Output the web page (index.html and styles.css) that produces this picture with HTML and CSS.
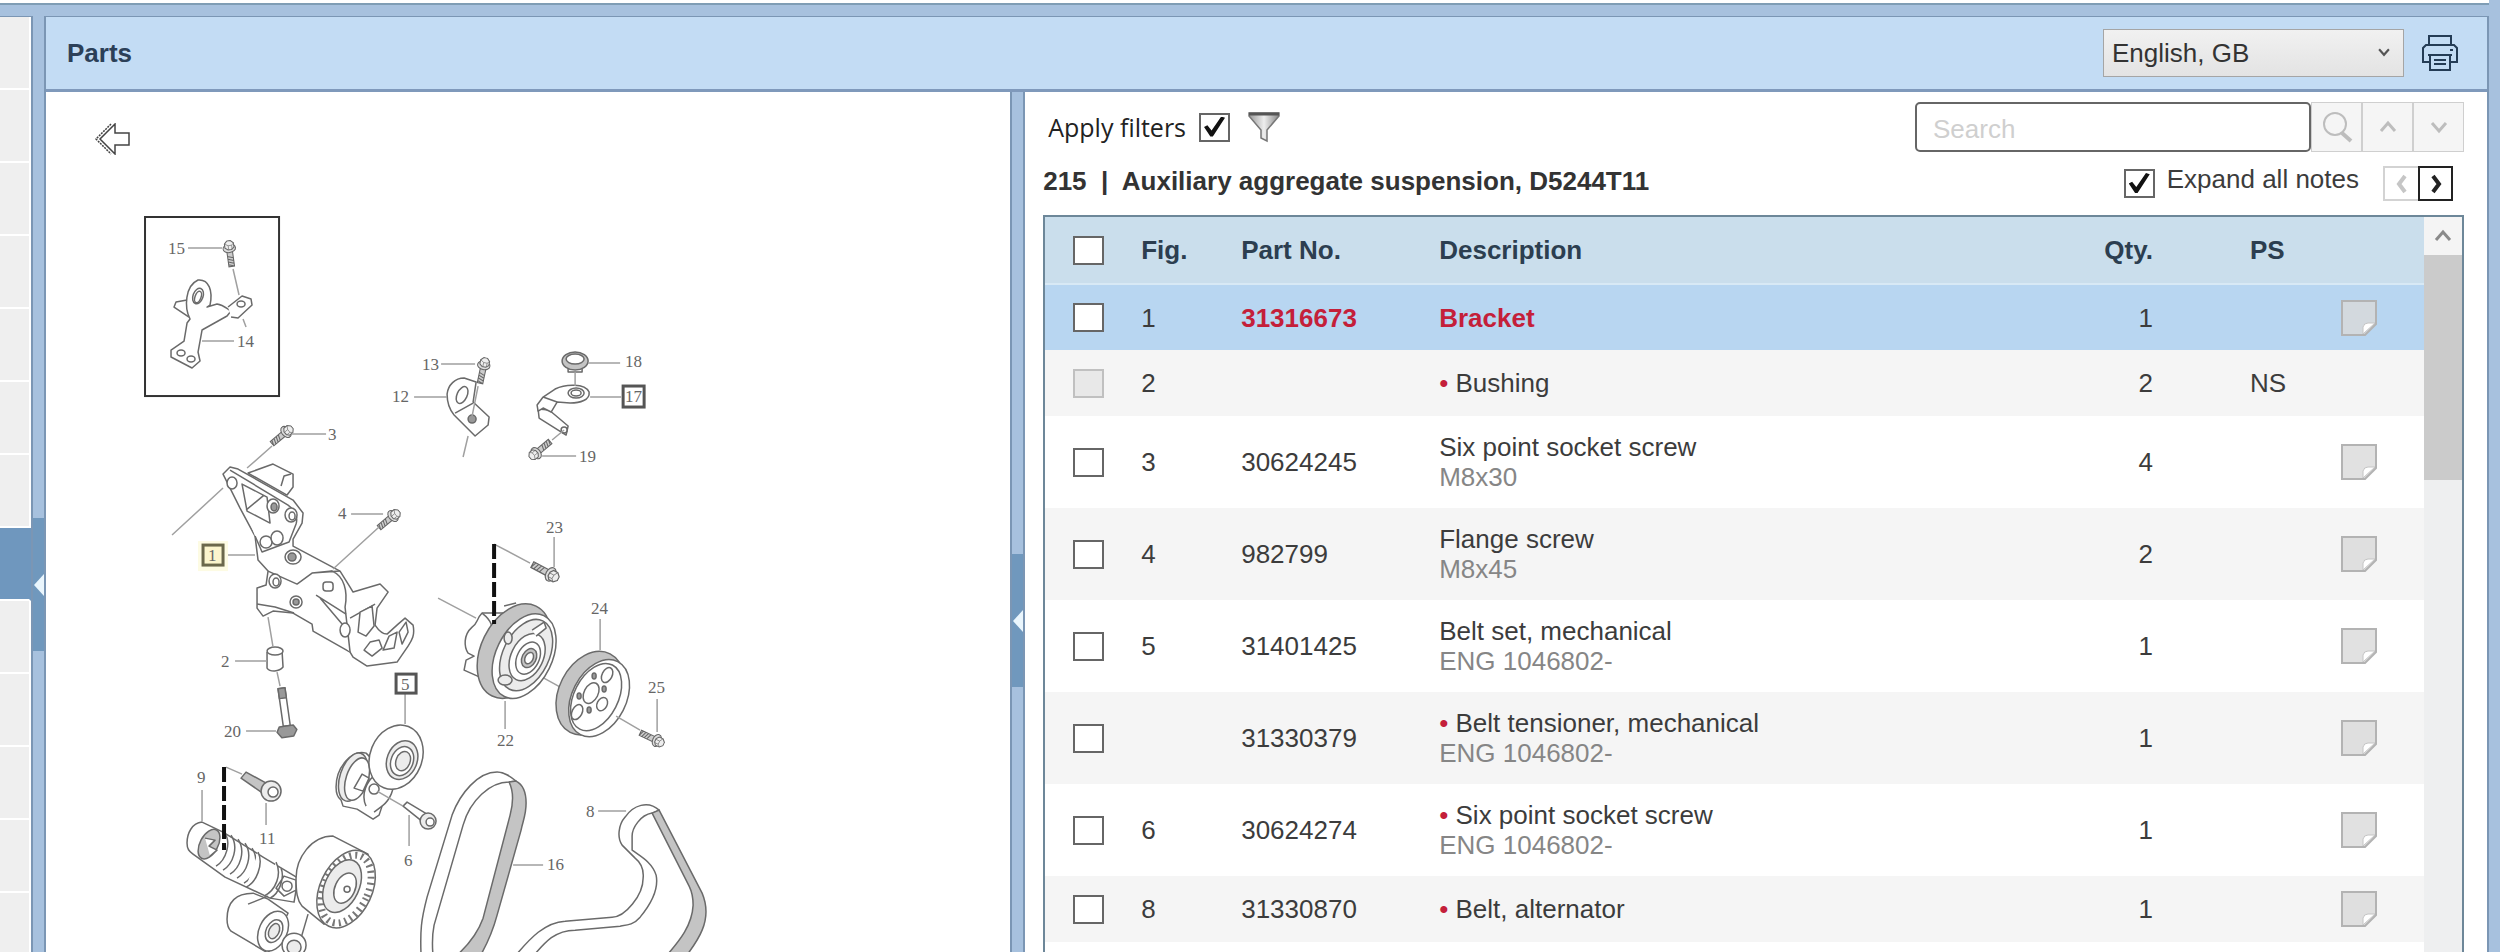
FILE: index.html
```html
<!DOCTYPE html>
<html lang="en">
<head>
  <meta charset="UTF-8" />
  <meta name="viewport" content="width=device-width,initial-scale=1.0" />
  <title>Parts</title>
  <link rel="stylesheet" href="styles.css">
</head>
<body>

  <!-- Shared icons -->
  <svg class="sprite" aria-hidden="true">
    <symbol id="icon-note" viewBox="0 0 36 36">
      <path d="M1 1h34v23L24 35H1z" fill="#d9d9d9" fill-opacity=".8" stroke="#b3b3b3" stroke-width="2"/>
      <path d="M22 34V27q1-4 5-4h7z" fill="#fff" stroke="#c4c4c4"/>
    </symbol>
    <symbol id="icon-up" viewBox="0 0 20 20">
      <path d="M3 14l7-8 7 8" fill="none" stroke="currentColor" stroke-width="3"/>
    </symbol>
    <symbol id="icon-down" viewBox="0 0 20 20">
      <path d="M3 6l7 8 7-8" fill="none" stroke="currentColor" stroke-width="3"/>
    </symbol>
    <symbol id="bolt" viewBox="-10 -10 20 42">
      <path d="M-4 4v24h8V4M-4 13l8 3M-4 17l8 3M-4 21l8 3M-4 25l8 3" fill="#ccc" stroke="#666" stroke-width="1.5"/>
      <ellipse cy="2" rx="9" ry="6" fill="#ddd" stroke="#666" stroke-width="1.5"/>
      <path d="M-6-5l4-4h5l4 4v6l-4 3h-5l-4-3z" fill="#eee" stroke="#666" stroke-width="1.5"/>
      <path d="M-6-5l5 3h5l3-3M-1-2v6M4-2v6" fill="none" stroke="#777"/>
    </symbol>
  </svg>

  <div class="topbar"></div>

  <div class="workspace">
    <!-- Collapsed list on the left -->
    <div class="rail">
      <div class="rail-row"></div>
      <div class="rail-row"></div>
      <div class="rail-row"></div>
      <div class="rail-row"></div>
      <div class="rail-row"></div>
      <div class="rail-row"></div>
      <div class="rail-row"></div>
      <div class="rail-row selected"></div>
      <div class="rail-row"></div>
      <div class="rail-row"></div>
      <div class="rail-row"></div>
      <div class="rail-row"></div>
      <div class="rail-row"></div>
    </div>
    <div class="splitter splitter-outer">
      <button class="splitter-handle" aria-label="Collapse list"></button>
    </div>

    <main class="panel">
      <header class="panel-header">
        <h1>Parts</h1>
        <div class="select-wrap">
          <select aria-label="Language">
            <option>English, GB</option>
          </select>
          <svg class="select-arrow" aria-hidden="true"><use href="#icon-down"/></svg>
        </div>
        <button class="print-btn" aria-label="Print">
          <svg viewBox="0 0 36 36" width="36" height="36" fill="none" stroke="#243c55" stroke-width="2">
            <path d="M7 11V1h22v10"/>
            <path d="M8 27H1V13l3-3h28l3 3v14h-7"/>
            <path d="M8 20h20v15H8z"/>
            <path d="M6 20h24M12 25h12M12 29h12"/>
            <path d="M28 15h3"/>
          </svg>
        </button>
      </header>

      <div class="panel-body">
        <!-- Exploded drawing -->
        <section class="drawing">
          <button class="back-btn" aria-label="Back">
            <svg viewBox="0 0 36 32" width="36" height="32" fill="#fff" stroke="#444" stroke-width="1.5">
              <path d="M20 1L5 16l15 15v-9h14V10H20z"/>
              <path d="M16 1L1 16l15 15" fill="none" stroke-dasharray="2 1"/>
            </svg>
          </button>
          <svg class="diagram" viewBox="46 200 964 752" role="img" aria-label="Auxiliary aggregate suspension">
            <!-- 14, 15 -->
            <rect x="145" y="217" width="134" height="179" class="frame"/>
            <g class="part">
              <path d="M187 300l-11 2-2 5 15 10"/>
              <path d="M190 319c-6-12-5-33 8-39 11-1 15 11 12 25l-3 2 10-3c7 1 10 5 14 7l-4 5-25 14-4 22 2 9-8 7-21-11v-7l13-9 3-18z"/>
              <path d="M228 307l14-11 9 3 1 6-14 13-7-1"/>
              <ellipse cx="198" cy="296" rx="5" ry="8" transform="rotate(20 198 296)"/>
              <ellipse cx="198" cy="297" rx="3" ry="6" transform="rotate(20 198 297)"/>
              <ellipse cx="241" cy="304" rx="4" ry="3"/>
              <ellipse cx="181" cy="353" rx="4" ry="3"/>
              <ellipse cx="191" cy="359" rx="4" ry="3"/>
            </g>
            <use href="#bolt" x="-10" y="-10" width="20" height="42" transform="translate(229 247) rotate(-8) scale(.7)"/>

            <!-- 12, 13 -->
            <g class="part">
              <path d="M447 394c1-9 8-16 17-16l12 4-3 20 16 15-1 8-13 11-21-21c-5-6-7-14-7-21z"/>
              <path d="M455 413l18-10"/>
              <ellipse cx="462" cy="395" rx="5" ry="9" transform="rotate(25 462 395)"/>
              <ellipse cx="472" cy="419" rx="4" ry="4" class="dark"/>
            </g>
            <use href="#bolt" x="-10" y="-10" width="20" height="42" transform="translate(484 364) rotate(12) scale(.7)"/>

            <!-- 17, 18, 19 -->
            <g class="part">
              <path d="M568 367v5h14v-5"/>
              <ellipse cx="575" cy="361" rx="13" ry="9" class="shade"/>
              <ellipse cx="575" cy="359" rx="9" ry="5"/>
              <path d="M538 409l1 9 27 17 2-9-19-16z"/>
              <path d="M537 405l6-8 12-8c10-5 30-6 34 3 1 8-9 11-19 11l-13-1-6 10-8-4-5 3z"/>
              <path d="M543 397l14 5"/>
              <ellipse cx="576" cy="393" rx="8" ry="5"/>
              <ellipse cx="576" cy="393" rx="5" ry="3"/>
              <circle cx="564" cy="430" r="3"/>
            </g>
            <use href="#bolt" x="-10" y="-10" width="20" height="42" transform="translate(535 454) rotate(-130) scale(.7)"/>

            <!-- 3, 4 -->
            <use href="#bolt" x="-10" y="-10" width="20" height="42" transform="translate(287 431) rotate(50) scale(.7)"/>
            <use href="#bolt" x="-10" y="-10" width="20" height="42" transform="translate(394 515) rotate(50) scale(.7)"/>

            <!-- 1 bracket -->
            <g class="part">
              <path d="M248 473l25-9 20 10v13l-6 8z"/>
              <path d="M281 486l3-10 7-2"/>
              <path d="M223 474l7-7 8 2 55 31 10 13-1 10-9 16v7l47 25 10 16 3 5 27-8 8 8-11 16-2 17c4 6 8 9 12 9l11-10 7-6 8 7c2 10-1 15-5 21l-11 16-30 4-14-9-3-5-37-21-1-7-19-11-20-2-10 5-6-8v-20l9-3 2-14-10-11-3-24-15-28z"/>
              <path d="M230 470l58 35c8 6 10 12 8 19l-7 18-27 10-7-16"/>
              <path d="M242 484l25 13 3 26-23-12zM246 510l18-15"/>
              <path d="M268 571l29 13 15-11 20-2c12 5 16 20 13 36l5 45M340 571l-28 2"/>
              <path d="M316 595l30 19M320 598l22 26M350 618l25-14"/>
              <path d="M257 604l18 3 19 6"/>
              <ellipse cx="232" cy="483" rx="5" ry="6"/>
              <ellipse cx="273" cy="506" rx="6" ry="7"/><ellipse cx="274" cy="507" rx="3" ry="4" class="dark"/>
              <ellipse cx="291" cy="515" rx="6" ry="7"/><ellipse cx="292" cy="516" rx="3" ry="4"/>
              <ellipse cx="266" cy="542" rx="6" ry="6"/><ellipse cx="277" cy="538" rx="6" ry="7"/>
              <ellipse cx="293" cy="557" rx="8" ry="7"/><ellipse cx="292" cy="557" rx="4" ry="4" class="dark"/>
              <ellipse cx="275" cy="581" rx="6" ry="7"/><ellipse cx="276" cy="582" rx="3" ry="4"/>
              <ellipse cx="296" cy="602" rx="6" ry="6"/><ellipse cx="296" cy="602" rx="3" ry="3" class="dark"/>
              <rect x="323" y="582" width="10" height="9" rx="3"/>
              <ellipse cx="345" cy="630" rx="5" ry="7"/>
              <path d="M360 612l12-6 2 20-8 10-8-4zM364 650l6-8 9-2 3 8-10 8zM383 650l6-14 8-4-3 16zM399 632l7-10 2 10-6 12z"/>
            </g>

            <!-- 2, 20 -->
            <g class="part">
              <path d="M267 652v16c3 4 12 4 16-1l-1-16"/>
              <ellipse cx="275" cy="651" rx="8" ry="4"/>
            </g>
            <g transform="rotate(-8 284 710)">
              <path class="part" d="M281 688h7v38h-7z"/>
              <path class="part dark" d="M281 688h7v10h-7zM277 726h14l3 5-4 6h-12l-4-6z"/>
            </g>

            <!-- 5, 6 -->
            <g class="part">
              <path d="M366 753c-14-4-30 14-30 34 0 8 2 11 5 13l2 6 14 3 16 10 6-4 3-9c8-6 13-18 11-26z"/>
              <ellipse cx="353" cy="777" rx="13" ry="25" transform="rotate(18 353 777)" class="light"/>
              <ellipse cx="357" cy="779" rx="11" ry="22" transform="rotate(18 357 779)"/>
              <path d="M354 788l8-14 7 4-6 13zM366 806c-6-12 2-26 8-30M374 812l8-6"/>
              <circle cx="374" cy="789" r="5"/>
              <ellipse cx="396" cy="757" rx="26" ry="33" transform="rotate(22 396 757)"/>
              <ellipse cx="402" cy="760" rx="15" ry="20" transform="rotate(22 402 760)" class="light"/>
              <ellipse cx="402" cy="761" rx="11" ry="15" transform="rotate(22 402 761)"/>
              <ellipse cx="403" cy="761" rx="7" ry="10" transform="rotate(22 403 761)" class="light"/>
              <path d="M403 806l4-4 20 12-4 8z"/>
              <circle cx="428" cy="821" r="8" class="light"/>
              <circle cx="430" cy="822" r="4"/>
            </g>

            <!-- 9, 11 -->
            <g class="part">
              <path d="M308 914l-7 24"/>
              <path d="M253 893c-18 0-26 10-26 26 0 6 1 9 4 12l37 22 20-40-20-14z"/>
              <ellipse cx="273" cy="931" rx="14" ry="21" transform="rotate(25 273 931)"/>
              <ellipse cx="274" cy="931" rx="8" ry="12" transform="rotate(25 274 931)"/>
              <ellipse cx="274" cy="931" rx="5" ry="8" transform="rotate(25 274 931)" class="light"/>
              <circle cx="294" cy="945" r="12"/>
              <circle cx="294" cy="947" r="7" class="light"/>
              <path d="M202 822c-10 1-15 11-15 21 0 6 2 8 6 11l32 23 45 21 24 4 4-24-35-21-40-25z"/>
              <ellipse cx="209" cy="844" rx="9" ry="16" transform="rotate(28 209 844)" class="shade"/>
              <path d="M205 838l10 2-6 6 8 4-7 6"/>
              <path class="ring" d="M224 832c8 10 2 28-8 34M231 835c8 12 2 29-8 35M238 839c8 12 2 29-8 35M245 843c8 12 2 29-8 35M252 848c8 12 2 29-8 35"/>
              <path d="M258 852c6 12-2 31-12 35M276 862c6 12 0 28-12 34M281 868c4 10-2 26-11 30M248 904l20-8M284 876l12 4v10l-12 6-8-8z"/>
              <circle cx="287" cy="886" r="5"/>
              <path d="M333 836c-22 0-37 22-37 42 0 14 1 22 6 28l22 18 20-6 24-64z"/>
              <ellipse cx="346" cy="889" rx="26" ry="41" transform="rotate(25 346 889)"/>
              <ellipse cx="346" cy="889" rx="22" ry="36" transform="rotate(25 346 889)" class="fins"/>
              <ellipse cx="342" cy="886" rx="17" ry="28" transform="rotate(25 342 886)" class="light"/>
              <ellipse cx="345" cy="888" rx="10" ry="16" transform="rotate(25 345 888)"/>
              <circle cx="347" cy="889" r="3"/>
              <path d="M241 778l5-6 22 12-4 10z" class="shade"/>
              <circle cx="271" cy="791" r="10" class="light"/>
              <circle cx="273" cy="792" r="5"/>
            </g>

            <!-- 22, 23 -->
            <path class="leader" d="M438 598l38 20M542 677l20 11"/>
            <g class="part">
              <path d="M504 613l-22 0c-6 6-4 10-10 14-9 8-8 20-4 26l6 3-8 4-2 10 18 8z"/>
              <path d="M482 613c10 8 12 14 6 22l-6 20M504 606l12-3"/>
              <ellipse cx="514" cy="651" rx="33" ry="50" transform="rotate(26 514 651)" class="shade"/>
              <ellipse cx="524" cy="656" rx="28" ry="45" transform="rotate(26 524 656)"/>
              <ellipse cx="526" cy="655" rx="23" ry="38" transform="rotate(26 526 655)" class="light"/>
              <ellipse cx="527" cy="657" rx="16" ry="25" transform="rotate(26 527 657)"/>
              <ellipse cx="528" cy="658" rx="11" ry="17" transform="rotate(26 528 658)"/>
              <ellipse cx="529" cy="658" rx="7" ry="10" transform="rotate(26 529 658)" class="shade"/>
              <ellipse cx="529" cy="658" rx="4" ry="6" transform="rotate(26 529 658)"/>
              <ellipse cx="508" cy="638" rx="4" ry="6" class="light"/>
              <ellipse cx="505" cy="680" rx="7" ry="5" class="light"/>
              <path d="M532 630l12-8 2 6-10 8"/>
            </g>
            <use href="#bolt" x="-10" y="-10" width="20" height="42" transform="translate(552 575) rotate(118) scale(.8)"/>

            <!-- 24, 25 -->
            <g class="part">
              <ellipse cx="590" cy="693" rx="31" ry="44" transform="rotate(27 590 693)" class="shade"/>
              <ellipse cx="599" cy="698" rx="27" ry="41" transform="rotate(27 599 698)"/>
              <ellipse cx="596" cy="697" rx="22" ry="36" transform="rotate(27 596 697)"/>
              <ellipse cx="591" cy="693" rx="7" ry="11" transform="rotate(27 591 693)"/>
              <ellipse cx="607" cy="675" rx="5" ry="8" transform="rotate(27 607 675)"/>
              <ellipse cx="577" cy="712" rx="5" ry="8" transform="rotate(27 577 712)"/>
              <ellipse cx="602" cy="704" rx="5" ry="7" transform="rotate(27 602 704)"/>
              <ellipse cx="594" cy="676" rx="2" ry="3" class="dark"/>
              <ellipse cx="604" cy="689" rx="2" ry="3" class="dark"/>
              <ellipse cx="589" cy="710" rx="2" ry="3" class="dark"/>
              <ellipse cx="579" cy="696" rx="2" ry="3" class="dark"/>
            </g>
            <use href="#bolt" x="-10" y="-10" width="20" height="42" transform="translate(658 741) rotate(115) scale(.7)"/>

            <!-- 16 belt -->
            <path class="part" d="M421 956C420 930 421 920 427 897L452 815C460 793 478 772 497 772C505 772 511 777 516 781L509 782C490 782 470 800 463 825L434 925C432 935 432 945 433 956z"/>
            <path class="part shade" d="M509 782L516 781C524 785 526 795 526 803C526 815 523 820 521 830L497 915C493 930 488 942 480 956H456C468 945 478 932 483 918L510 815C514 800 513 790 509 782z"/>

            <!-- 8 belt -->
            <path class="part" d="M515 956C530 938 545 922 565 921L612 917C625 917 643 895 643 878C644 868 640 862 635 858L622 845C617 838 618 825 625 817C633 805 648 800 659 810L652 813C640 815 632 828 632 836V850C640 856 652 862 656 875C659 890 650 905 640 917C633 925 627 925 620 926L575 930C555 930 545 942 533 956z"/>
            <path class="part shade" d="M652 813L659 810L702 893C707 905 707 918 702 930C698 940 692 948 686 956H666C680 940 692 925 693 905C693 897 692 892 689 886z"/>

            <!-- Leaders -->
            <path class="leader" d="M188 248h34M233 269l6 26M243 319l3 8M202 341h32
              M441 364h34M414 397h33M468 436l-5 21M478 386l-6 30
              M588 363h32M575 372v14M590 397h31M552 440l12-10M542 456h34
              M292 434h34M272 446l-25 22M172 535l51-47M225 555h30
              M351 514h32M379 527l-46 42M235 661h32M268 617l5 30M277 672l3 14M246 731h30
              M405 694v30M377 791l26 15M409 815v31M202 790v31M226 767l16 7M266 803v22
              M494 544l36 19M554 537v30M505 701v28M600 619v31M616 716l24 14M657 699v33
              M513 865h30M598 811h28"/>
            <path class="dash-line" d="M224 767v83"/>
            <path class="dash-line" d="M494 544v80"/>

            <!-- Boxed callouts -->
            <rect x="198" y="541" width="30" height="30" class="glow"/>
            <rect x="203" y="545" width="20" height="20" class="callout active"/>
            <rect x="396" y="674" width="20" height="19" class="callout"/>
            <rect x="623" y="386" width="21" height="21" class="callout"/>

            <g class="labels">
              <text x="168" y="254">15</text>
              <text x="237" y="347">14</text>
              <text x="422" y="370">13</text>
              <text x="392" y="402">12</text>
              <text x="625" y="367">18</text>
              <text x="625" y="402">17</text>
              <text x="579" y="462">19</text>
              <text x="328" y="440">3</text>
              <text x="338" y="519">4</text>
              <text x="208" y="561">1</text>
              <text x="221" y="667">2</text>
              <text x="224" y="737">20</text>
              <text x="401" y="690">5</text>
              <text x="404" y="866">6</text>
              <text x="197" y="783">9</text>
              <text x="259" y="844">11</text>
              <text x="546" y="533">23</text>
              <text x="591" y="614">24</text>
              <text x="648" y="693">25</text>
              <text x="497" y="746">22</text>
              <text x="547" y="870">16</text>
              <text x="586" y="817">8</text>
            </g>
          </svg>
        </section>

        <div class="splitter">
          <button class="splitter-handle" aria-label="Collapse drawing"></button>
        </div>

        <!-- Parts list -->
        <section class="parts">
          <div class="toolbar">
            <label class="filter-label" for="applyFilters">Apply filters</label>
            <input type="checkbox" id="applyFilters" checked />
            <svg class="filter-icon" viewBox="0 0 32 32" width="32" height="32">
              <defs>
                <linearGradient id="funnel">
                  <stop offset="0" stop-color="#999"/>
                  <stop offset=".5" stop-color="#eee"/>
                  <stop offset="1" stop-color="#888"/>
                </linearGradient>
              </defs>
              <path d="M1 2h30v3L19 19v11l-6-3v-8L1 5z" fill="url(#funnel)" stroke="#777" stroke-width="1.5"/>
              <path d="M1 3h30" stroke="#555" stroke-width="3"/>
            </svg>
            <div class="search">
              <input type="text" placeholder="Search" aria-label="Search" />
              <button disabled aria-label="Find">
                <svg viewBox="0 0 32 32" width="32" height="32" fill="none" stroke="currentColor">
                  <circle cx="14" cy="13" r="11" stroke-width="2"/>
                  <path d="M21 22l9 8" stroke-width="4"/>
                </svg>
              </button>
              <button disabled aria-label="Previous match"><svg class="chevron"><use href="#icon-up"/></svg></button>
              <button disabled aria-label="Next match"><svg class="chevron"><use href="#icon-down"/></svg></button>
            </div>
          </div>

          <div class="subbar">
            <h2>215 &nbsp;|&nbsp; Auxiliary aggregate suspension, D5244T11</h2>
            <input type="checkbox" id="expandNotes" checked />
            <label for="expandNotes">Expand all notes</label>
            <div class="pager">
              <button disabled aria-label="Previous">
                <svg viewBox="0 0 20 24" width="20" height="24"><path d="M13 4l-6 8 6 8" fill="none" stroke="currentColor" stroke-width="4"/></svg>
              </button>
              <button aria-label="Next">
                <svg viewBox="0 0 20 24" width="20" height="24"><path d="M7 4l6 8-6 8" fill="none" stroke="currentColor" stroke-width="4"/></svg>
              </button>
            </div>
          </div>

          <div class="table-frame">
            <div class="table-scroll">
              <table>
                <thead>
                  <tr>
                    <th class="col-check"><input type="checkbox" aria-label="Select all" /></th>
                    <th class="col-fig">Fig.</th>
                    <th class="col-no">Part No.</th>
                    <th>Description</th>
                    <th class="col-qty">Qty.</th>
                    <th class="col-ps">PS</th>
                    <th class="col-note"></th>
                  </tr>
                </thead>
                <tbody>
                  <tr class="selected">
                    <td class="col-check"><input type="checkbox" aria-label="Select 31316673" /></td>
                    <td>1</td>
                    <td class="hit">31316673</td>
                    <td class="hit">Bracket</td>
                    <td class="col-qty">1</td>
                    <td class="col-ps"></td>
                    <td class="col-note"><button class="note-btn" aria-label="Note"><svg><use href="#icon-note"/></svg></button></td>
                  </tr>
                  <tr>
                    <td class="col-check"><input type="checkbox" aria-label="Select Bushing" disabled /></td>
                    <td>2</td>
                    <td></td>
                    <td><span class="bullet">•</span> Bushing</td>
                    <td class="col-qty">2</td>
                    <td class="col-ps">NS</td>
                    <td class="col-note"></td>
                  </tr>
                  <tr class="tall">
                    <td class="col-check"><input type="checkbox" aria-label="Select 30624245" /></td>
                    <td>3</td>
                    <td>30624245</td>
                    <td>Six point socket screw<div class="note">M8x30</div></td>
                    <td class="col-qty">4</td>
                    <td class="col-ps"></td>
                    <td class="col-note"><button class="note-btn" aria-label="Note"><svg><use href="#icon-note"/></svg></button></td>
                  </tr>
                  <tr class="tall">
                    <td class="col-check"><input type="checkbox" aria-label="Select 982799" /></td>
                    <td>4</td>
                    <td>982799</td>
                    <td>Flange screw<div class="note">M8x45</div></td>
                    <td class="col-qty">2</td>
                    <td class="col-ps"></td>
                    <td class="col-note"><button class="note-btn" aria-label="Note"><svg><use href="#icon-note"/></svg></button></td>
                  </tr>
                  <tr class="tall">
                    <td class="col-check"><input type="checkbox" aria-label="Select 31401425" /></td>
                    <td>5</td>
                    <td>31401425</td>
                    <td>Belt set, mechanical<div class="note">ENG 1046802-</div></td>
                    <td class="col-qty">1</td>
                    <td class="col-ps"></td>
                    <td class="col-note"><button class="note-btn" aria-label="Note"><svg><use href="#icon-note"/></svg></button></td>
                  </tr>
                  <tr class="tall">
                    <td class="col-check"><input type="checkbox" aria-label="Select 31330379" /></td>
                    <td></td>
                    <td>31330379</td>
                    <td><span class="bullet">•</span> Belt tensioner, mechanical<div class="note">ENG 1046802-</div></td>
                    <td class="col-qty">1</td>
                    <td class="col-ps"></td>
                    <td class="col-note"><button class="note-btn" aria-label="Note"><svg><use href="#icon-note"/></svg></button></td>
                  </tr>
                  <tr class="tall">
                    <td class="col-check"><input type="checkbox" aria-label="Select 30624274" /></td>
                    <td>6</td>
                    <td>30624274</td>
                    <td><span class="bullet">•</span> Six point socket screw<div class="note">ENG 1046802-</div></td>
                    <td class="col-qty">1</td>
                    <td class="col-ps"></td>
                    <td class="col-note"><button class="note-btn" aria-label="Note"><svg><use href="#icon-note"/></svg></button></td>
                  </tr>
                  <tr>
                    <td class="col-check"><input type="checkbox" aria-label="Select 31330870" /></td>
                    <td>8</td>
                    <td>31330870</td>
                    <td><span class="bullet">•</span> Belt, alternator</td>
                    <td class="col-qty">1</td>
                    <td class="col-ps"></td>
                    <td class="col-note"><button class="note-btn" aria-label="Note"><svg><use href="#icon-note"/></svg></button></td>
                  </tr>
                </tbody>
              </table>
            </div>
            <div class="scrollbar">
              <button aria-label="Scroll up"><svg class="chevron"><use href="#icon-up"/></svg></button>
              <div class="thumb"></div>
            </div>
          </div>
        </section>
      </div>
    </main>
  </div>

</body>
</html>
```

FILE: styles.css
```css
* {
  box-sizing: border-box;
}
body {
  margin: 0;
  height: 100vh;
  overflow: hidden;
  display: flex;
  flex-direction: column;
  background: #a7c1de;
  color: #3c3c3c;
  font-family: "Liberation Sans", Arial, sans-serif;
  font-size: 26px;
  line-height: 30px;
}
button {
  padding: 0;
  border: none;
  background: none;
  display: flex;
  align-items: center;
  justify-content: center;
}
h1,
h2 {
  margin: 0;
  font-size: 26px;
  font-weight: bold;
}
.sprite {
  position: absolute;
  width: 0;
  height: 0;
}
.topbar {
  flex: none;
  height: 5px;
  margin-right: 11px;
  background: #fff;
  border-bottom: 2px solid #7f9db5;
}
.workspace {
  flex: 1;
  min-height: 0;
  display: flex;
  margin: 11px 11px 0 0;
}

/* Left rail */
.rail {
  flex: none;
  width: 31px;
  overflow: hidden;
  background: #fff;
  border-top: 1px solid #7b96b4;
}
.rail-row {
  height: 73px;
  background: #efefef;
  border-bottom: 2px solid #fff;
  border-right: 2px solid #fff;
}
.rail-row.selected {
  background: #6f97be;
  border-right-color: #6f97be;
}

/* Splitters */
.splitter {
  flex: none;
  width: 15px;
  background: #a7c1de;
  border-left: 2px solid #7b96b4;
  border-right: 2px solid #7b96b4;
}
.splitter-outer {
  border-right: none;
  width: 13px;
}
.splitter-handle {
  width: 100%;
  height: 133px;
  margin-top: 462px;
  background: #7098bd;
}
.splitter-outer .splitter-handle {
  margin-top: 502px;
}
.splitter-handle::after {
  content: "";
  border: 11px solid transparent;
  border-left: none;
  border-right: 10px solid #eaf6fd;
}

/* Panel */
.panel {
  flex: 1;
  min-width: 0;
  display: flex;
  flex-direction: column;
  border: 2px solid #7b96b4;
  border-top-width: 1px;
  border-bottom: none;
  background: #fff;
}
.panel-header {
  flex: none;
  height: 75px;
  display: flex;
  align-items: center;
  padding: 0 29px 0 21px;
  background: #c3dcf4;
  border-bottom: 3px solid #7f99bb;
}
.panel-header h1 {
  flex: 1;
  color: #2c4058;
}
.select-wrap {
  position: relative;
  width: 301px;
}
.select-wrap select {
  display: block;
  width: 100%;
  height: 48px;
  padding: 0 40px 0 8px;
  appearance: none;
  border: 1px solid #a5a5a5;
  border-radius: 0;
  background: linear-gradient(#f1f1f1, #e3e3e3);
  color: #333;
  font: inherit;
}
.select-arrow {
  position: absolute;
  right: 13px;
  top: 16px;
  width: 14px;
  height: 14px;
  color: #555;
  pointer-events: none;
}
.print-btn {
  margin-left: 18px;
}
.panel-body {
  flex: 1;
  min-height: 0;
  display: flex;
}

/* Drawing */
.drawing {
  flex: none;
  width: 39.5%;
  overflow: hidden;
}
.back-btn {
  margin: 31px 0 45px 49px;
}
.diagram {
  display: block;
  width: 100%;
}
.frame {
  fill: none;
  stroke: #333;
  stroke-width: 2;
}
.part {
  fill: #fff;
  stroke: #6a6a6a;
  stroke-width: 1.5;
  stroke-linejoin: round;
}
.shade {
  fill: #c4c4c4;
}
.light {
  fill: #ececec;
}
.dark {
  fill: #999;
}
.ring {
  fill: none;
}
.fins {
  fill: none;
  stroke: #777;
  stroke-width: 7;
  stroke-dasharray: 2 4;
}
.leader {
  fill: none;
  stroke: #a0a0a0;
  stroke-width: 1.5;
}
.dash-line {
  stroke: #111;
  stroke-width: 4;
  stroke-dasharray: 15 4;
}
.callout {
  fill: none;
  stroke: #555;
  stroke-width: 3;
}
.callout.active {
  fill: #fbf5cd;
  stroke: #6b684c;
}
.glow {
  fill: #fdfbe3;
}
.labels {
  font-family: "Liberation Serif", "Times New Roman", serif;
  font-size: 17px;
  fill: #666;
}

/* Parts list */
.parts {
  flex: 1;
  min-width: 0;
  display: flex;
  flex-direction: column;
  padding: 10px 23px 0 18px;
}
.toolbar {
  flex: none;
  height: 50px;
  display: flex;
  align-items: center;
  padding-left: 5px;
}
.filter-label {
  font-family: "Open Sans", "Noto Sans", sans-serif;
  font-size: 25px;
  color: #222;
}
input[type="checkbox"] {
  flex: none;
  appearance: none;
  display: block;
  width: 31px;
  height: 29px;
  margin: 0;
  background: #fff;
  border: 2px solid #666;
}
input[type="checkbox"]:checked::after {
  content: "";
  display: block;
  width: 21px;
  height: 20px;
  margin: 2px 3px;
  background: #111;
  clip-path: polygon(0 52%, 16% 44%, 36% 70%, 82% 0, 100% 6%, 42% 100%, 30% 100%);
}
input[type="checkbox"]:disabled {
  background: #e8e8e8;
  border-color: #c0c0c0;
}
.toolbar > input[type="checkbox"] {
  margin-left: 13px;
}
.filter-icon {
  margin-left: 18px;
}
.search {
  margin-left: auto;
  height: 50px;
  display: flex;
}
.search input {
  width: 396px;
  padding: 4px 16px 0;
  border: 2px solid #666;
  border-radius: 5px;
  font: inherit;
  background: #fff;
}
.search input::placeholder {
  color: #cfcfcf;
  opacity: 1;
}
.search button {
  width: 51px;
  color: #bdbdbd;
  background: #f5f5f5;
  border: 1px solid #cfcfcf;
}
.chevron {
  width: 20px;
  height: 20px;
}
.subbar {
  flex: none;
  height: 63px;
  display: flex;
  align-items: center;
  padding-right: 11px;
}
.subbar h2 {
  flex: 1;
  padding-bottom: 6px;
  color: #333;
}
.subbar label {
  padding: 0 24px 10px 12px;
}
.pager {
  display: flex;
}
.pager button {
  width: 35px;
  height: 35px;
  border: 2px solid #222;
  color: #222;
  background: #fff;
}
.pager button:disabled {
  color: #c6c6c6;
  border-color: #d3d3d3;
  border-right: none;
}

/* Table */
.table-frame {
  flex: 1;
  min-height: 0;
  display: flex;
  border: 2px solid #6d8799;
  border-bottom: none;
}
.table-scroll {
  flex: 1;
  min-width: 0;
  overflow: hidden;
}
table {
  width: 100%;
  table-layout: fixed;
  border-collapse: collapse;
}
th,
td {
  padding: 0;
  text-align: left;
}
th {
  height: 67px;
  color: #2c3e50;
  background: #cadeec;
  border-bottom: 2px solid #d8e9f5;
}
td {
  height: 66px;
}
.tall td {
  height: 92px;
}
tbody tr:nth-child(even) {
  background: #f5f5f5;
}
tbody tr.selected {
  background: #b8d6f1;
}
.col-check {
  width: 96px;
  padding-left: 28px;
}
.col-fig {
  width: 100px;
}
.col-no {
  width: 198px;
}
th.col-qty {
  width: 120px;
}
.col-qty {
  text-align: right;
}
.col-ps {
  width: 188px;
  padding-left: 97px;
}
.col-note {
  width: 83px;
}
.hit {
  color: #c41f3a;
  font-weight: bold;
}
.bullet {
  color: #c41f3a;
}
.note {
  color: #868686;
}
.note-btn svg {
  width: 36px;
  height: 36px;
}
.scrollbar {
  flex: none;
  width: 38px;
  background: #eeeff0;
}
.scrollbar button {
  width: 100%;
  height: 38px;
  color: #8a8a8a;
  background: #f4f4f4;
}
.thumb {
  height: 225px;
  background: #cbcbcb;
}
```
